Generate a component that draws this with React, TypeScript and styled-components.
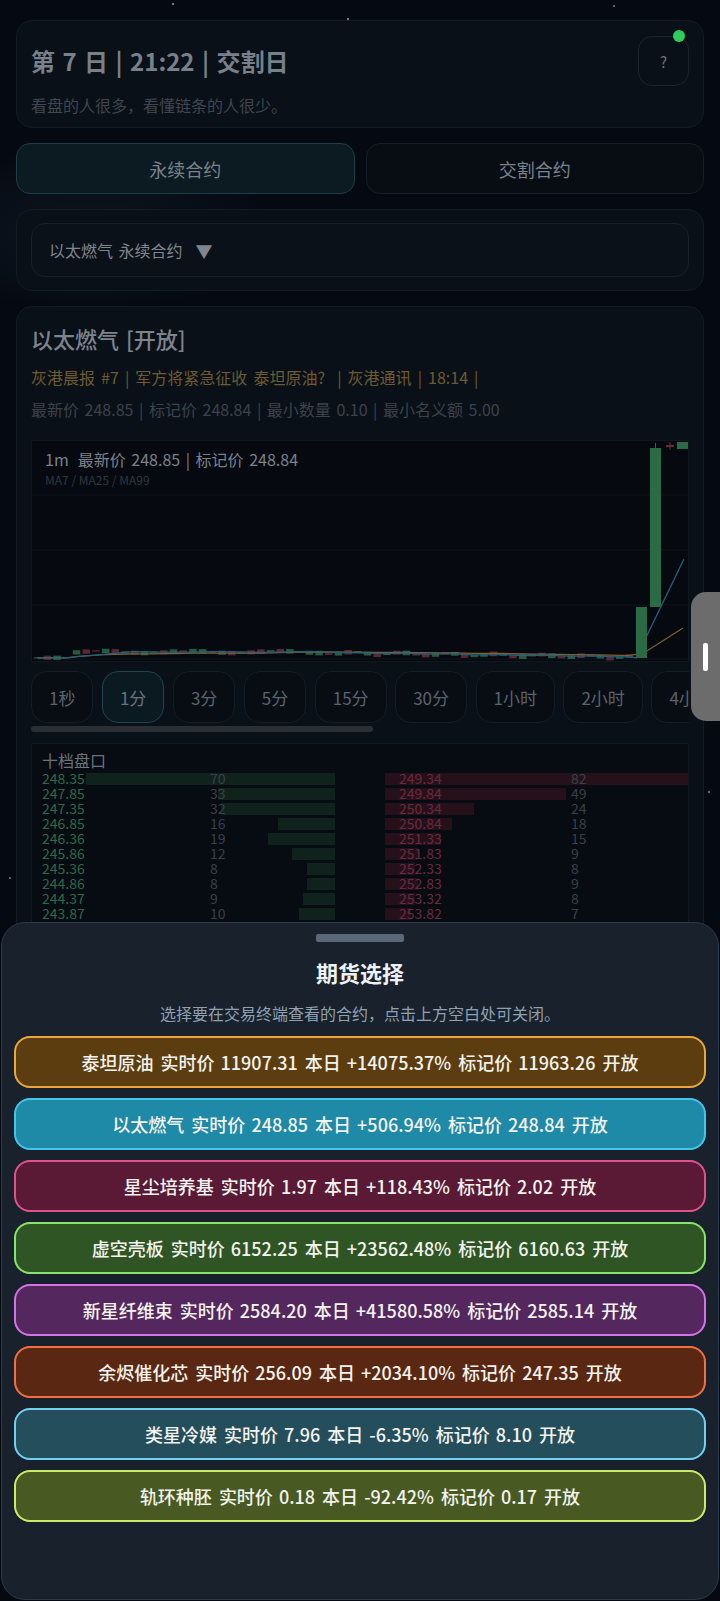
import React from 'react';
import styled, { createGlobalStyle } from 'styled-components';

const GlobalStyle = createGlobalStyle`
  * { box-sizing: border-box; }
  html, body { margin: 0; padding: 0; }
  body {
    background-color: #050a12;
    background-image:
      radial-gradient(circle at 173px 4px, rgba(160,170,190,0.7) 0 1px, transparent 1.6px),
      radial-gradient(circle at 348px 19px, rgba(160,170,190,0.7) 0 1px, transparent 1.6px),
      radial-gradient(circle at 614px 6px, rgba(160,170,190,0.5) 0 1px, transparent 1.6px),
      radial-gradient(circle at 709px 792px, rgba(160,170,190,0.6) 0 1px, transparent 1.6px),
      radial-gradient(circle at 10px 878px, rgba(160,170,190,0.5) 0 1px, transparent 1.6px),
      radial-gradient(ellipse 260px 120px at 90px 230px, rgba(22,30,42,0.55), transparent 70%);
    background-repeat: no-repeat;
    font-family: "Noto Sans CJK SC", "Noto Sans", sans-serif;
    word-spacing: 2px;
    overflow: hidden;
  }
`;

const Page = styled.div`
  display: flex;
  flex-direction: column;
  gap: 15px;
  padding: 20px 16px;
`;

const Card = styled.section`
  background: #0a1018;
  border: 1px solid #141b24;
  border-radius: 16px;
`;

const HeaderCard = styled(Card)`
  padding: 15px 14px 11px 14px;
`;

const HeaderRow = styled.div`
  display: flex;
  align-items: center;
  justify-content: space-between;
`;

const DayTitle = styled.h1`
  margin: 0;
  font-size: 24px;
  line-height: 32px;
  font-weight: 600;
  color: #78808a;
`;

const HelpButton = styled.button`
  position: relative;
  width: 51px;
  height: 50px;
  border-radius: 14px;
  border: 1px solid #1b232c;
  background: #0a1018;
  color: #6b737c;
  font-family: inherit;
  font-size: 15px;
  padding: 0;
`;

const LiveDot = styled.span`
  position: absolute;
  top: -7px;
  right: 3px;
  width: 12px;
  height: 12px;
  border-radius: 50%;
  background: #2ecc5f;
`;

const Motto = styled.p`
  margin: 8px 0 0;
  font-size: 16px;
  line-height: 22px;
  color: #3e4650;
`;

const Tabs = styled.div`
  display: grid;
  grid-template-columns: 1fr 1fr;
  gap: 11px;
`;

const Tab = styled.button<{ $active?: boolean }>`
  height: 51px;
  border-radius: 14px;
  font-family: inherit;
  font-size: 18px;
  color: #7a828b;
  background: ${(p) => (p.$active ? '#0c1a22' : '#080d14')};
  border: ${(p) => (p.$active ? '1.5px solid #1b3e4a' : '1px solid #161d26')};
`;

const SelectorCard = styled(Card)`
  padding: 13px 14px;
`;

const SelectBox = styled.div`
  height: 54px;
  display: flex;
  align-items: center;
  padding-left: 17px;
  border-radius: 14px;
  border: 1px solid #18202a;
  background: #0b1119;
  font-size: 16px;
  color: #7f868e;
`;

const Caret = styled.span`
  margin-left: 13px;
  font-size: 17px;
`;

const MainCard = styled(Card)`
  padding: 16px 14px 14px;
`;

const MarketTitle = styled.h2`
  margin: 0;
  font-size: 22px;
  line-height: 30px;
  font-weight: 500;
  color: #7d848c;
`;

const NewsLine = styled.div`
  margin-top: 12px;
  font-size: 16px;
  line-height: 24px;
  color: #6e5b31;
  word-spacing: 2.5px;
`;

const StatsLine = styled.div`
  margin-top: 8px;
  font-size: 16px;
  line-height: 24px;
  color: #3b434c;
`;

const ChartBox = styled.div`
  position: relative;
  margin-top: 19px;
  height: 222px;
  border: 1px solid #10171f;
  background: #060a10;
`;

const ChartSvg = styled.svg`
  display: block;
  width: 656px;
  height: 220px;
`;

const ChartLabel = styled.div`
  position: absolute;
  top: 8px;
  left: 13px;
`;

const ChartPrice = styled.div`
  font-size: 16px;
  line-height: 20px;
  color: #7a818a;
`;

const Interval = styled.span`
  margin-right: 9px;
`;

const MaLegend = styled.div`
  margin-top: 3px;
  font-size: 12px;
  line-height: 16px;
  color: #2f3740;
  word-spacing: 0;
`;

const IntervalRow = styled.div`
  margin-top: 9px;
  display: flex;
  gap: 8.5px;
  overflow: hidden;
`;

const IntervalButton = styled.button<{ $active?: boolean }>`
  flex-shrink: 0;
  height: 52px;
  padding: 0 17px;
  border-radius: 16px;
  font-family: inherit;
  font-size: 17px;
  color: ${(p) => (p.$active ? '#6a737d' : '#5b636c')};
  background: ${(p) => (p.$active ? '#0b1a21' : '#080d14')};
  border: 1px solid ${(p) => (p.$active ? '#1c4652' : '#141c25')};
`;

const ScrollTrack = styled.div`
  margin-top: 3px;
  height: 6px;
`;

const ScrollThumb = styled.div`
  width: 342px;
  height: 6px;
  border-radius: 3px;
  background: #2a2f36;
`;

const BookPanel = styled.div`
  margin-top: 11px;
  border: 1px solid #111820;
  background: #070b12;
  padding: 5px 0 6px 10px;
`;

const BookTitle = styled.div`
  font-size: 16px;
  line-height: 22px;
  color: #6c737c;
`;

const BookRow = styled.div`
  display: grid;
  grid-template-columns: 293px 303px;
  justify-content: space-between;
  height: 15px;
  font-size: 14px;
  line-height: 15px;
`;

const BidCell = styled.div`
  position: relative;
  display: grid;
  grid-template-columns: 168px 1fr;
`;

const AskCell = styled.div`
  position: relative;
  display: grid;
  grid-template-columns: 172px 1fr;
  padding-left: 14px;
`;

const DepthBar = styled.div<{ $side: 'bid' | 'ask' }>`
  position: absolute;
  top: 2px;
  height: 12px;
  ${(p) => (p.$side === 'bid' ? 'right: 0; background: #0f231c;' : 'left: 0; background: #26111b;')}
`;

const Price = styled.span<{ $side: 'bid' | 'ask' }>`
  position: relative;
  color: ${(p) => (p.$side === 'bid' ? '#2b6a46' : '#6b2a3b')};
`;

const Qty = styled.span`
  position: relative;
  color: #3a4048;
`;

const EdgeHandle = styled.div`
  position: fixed;
  right: 0;
  top: 592px;
  width: 29px;
  height: 129px;
  border-radius: 15px 0 0 15px;
  background: #6c6c6c;
  display: flex;
  align-items: center;
  justify-content: center;
`;

const HandleBar = styled.div`
  width: 5px;
  height: 28px;
  border-radius: 2px;
  background: #ffffff;
`;

const Sheet = styled.div`
  position: fixed;
  left: 1px;
  right: 1px;
  top: 922px;
  bottom: 1px;
  background: #18212c;
  border: 1px solid #2a3a4b;
  border-radius: 24px;
  padding: 11px 12px 0;
  display: flex;
  flex-direction: column;
`;

const Grabber = styled.div`
  align-self: center;
  width: 88px;
  height: 8px;
  border-radius: 2px;
  background: #5a6878;
`;

const SheetTitle = styled.h3`
  margin: 14px 0 0;
  text-align: center;
  font-size: 22px;
  line-height: 32px;
  font-weight: 700;
  color: #eef2f6;
`;

const SheetHint = styled.p`
  margin: 14px 0 0;
  text-align: center;
  font-size: 16px;
  line-height: 22px;
  color: #8fa1b3;
`;

const FuturesList = styled.div`
  margin-top: 12px;
  display: flex;
  flex-direction: column;
  gap: 10px;
`;

const FutureItem = styled.button<{ $bg: string; $border: string }>`
  height: 52px;
  border-radius: 16px;
  border: 2px solid ${(p) => p.$border};
  background: ${(p) => p.$bg};
  display: flex;
  align-items: center;
  justify-content: center;
  gap: 7px;
  font-family: inherit;
  font-size: 18px;
  font-weight: 500;
  word-spacing: 2px;
  color: #f3f3ee;
  padding: 0;
`;

const book = [
  { bp: '248.35', bq: 70, ap: '249.34', aq: 82 },
  { bp: '247.85', bq: 33, ap: '249.84', aq: 49 },
  { bp: '247.35', bq: 32, ap: '250.34', aq: 24 },
  { bp: '246.85', bq: 16, ap: '250.84', aq: 18 },
  { bp: '246.36', bq: 19, ap: '251.33', aq: 15 },
  { bp: '245.86', bq: 12, ap: '251.83', aq: 9 },
  { bp: '245.36', bq: 8, ap: '252.33', aq: 8 },
  { bp: '244.86', bq: 8, ap: '252.83', aq: 9 },
  { bp: '244.37', bq: 9, ap: '253.32', aq: 8 },
  { bp: '243.87', bq: 10, ap: '253.82', aq: 7 },
];

const intervals = ['1秒', '1分', '3分', '5分', '15分', '30分', '1小时', '2小时', '4小时', '6小时', '12小时'];

const futures = [
  { name: '泰坦原油', price: '11907.31', day: '+14075.37%', mark: '11963.26', bg: '#5c3d0f', border: '#eca63a' },
  { name: '以太燃气', price: '248.85', day: '+506.94%', mark: '248.84', bg: '#1f89a8', border: '#42c6f0' },
  { name: '星尘培养基', price: '1.97', day: '+118.43%', mark: '2.02', bg: '#5a1a36', border: '#e0528c' },
  { name: '虚空壳板', price: '6152.25', day: '+23562.48%', mark: '6160.63', bg: '#2f5525', border: '#88e46c' },
  { name: '新星纤维束', price: '2584.20', day: '+41580.58%', mark: '2585.14', bg: '#54275f', border: '#d672e8' },
  { name: '余烬催化芯', price: '256.09', day: '+2034.10%', mark: '247.35', bg: '#5a2812', border: '#f07042' },
  { name: '类星冷媒', price: '7.96', day: '-6.35%', mark: '8.10', bg: '#254e5c', border: '#72d0f2' },
  { name: '轨环种胚', price: '0.18', day: '-92.42%', mark: '0.17', bg: '#485a22', border: '#cdeb6a' },
];

type Candle = { x: number; top: number; h: number; up: boolean; mid: number };

const candles: Candle[] = Array.from({ length: 62 }, (_, i) => {
  const x = 2 + i * 9.7;
  let mid: number;
  if (i < 4) mid = 216.8;
  else if (i < 30) mid = 211 + Math.sin(i * 0.7) * 1.1;
  else mid = 211.8 + (i - 30) * 0.14 + Math.sin(i * 1.3) * 1.3;
  const h = 1.2 + Math.abs(Math.sin(i * 2.1)) * 3.6;
  const up = Math.sin(i * 3.7) > -0.1;
  return { x, top: mid - h / 2, h, up, mid };
});

const ma = (n: number) =>
  candles.map((c, i) => {
    const s = candles.slice(Math.max(0, i - n + 1), i + 1);
    const v = s.reduce((a, b) => a + b.mid, 0) / s.length;
    return `${(c.x + 3.5).toFixed(1)},${v.toFixed(1)}`;
  });

const blueLine = [...ma(7), '604,217', '652,118'].join(' ');
const orangeLine = [...ma(25), '611,212.5', '651,187'].join(' ');

function PriceChart() {
  return (
    <ChartBox>
      <ChartSvg viewBox="0 0 656 220">
        {[54, 109, 164, 218].map((y) => (
          <line key={y} x1="0" x2="656" y1={y} y2={y} stroke="#0e141c" strokeWidth="1" />
        ))}
        {candles.map((c, i) => (
          <rect
            key={i}
            x={c.x}
            y={c.top}
            width="7.5"
            height={c.h}
            fill={c.up ? '#245c3e' : '#5e2532'}
          />
        ))}
        <polyline points={orangeLine} fill="none" stroke="#7d5f34" strokeWidth="1.3" />
        <polyline points={blueLine} fill="none" stroke="#23607f" strokeWidth="1.3" />
        <rect x="604" y="166" width="11" height="51" fill="#2a6a45" />
        <line x1="623.5" x2="623.5" y1="2" y2="8" stroke="#2a6a45" strokeWidth="1" />
        <rect x="618" y="7" width="11" height="159" fill="#2a6a45" />
        <line x1="638" x2="638" y1="1" y2="9" stroke="#6b2a38" strokeWidth="1" />
        <rect x="634" y="4" width="8" height="2" fill="#6b2a38" />
        <rect x="645" y="1" width="11" height="7" fill="#2a6a45" />
      </ChartSvg>
      <ChartLabel>
        <ChartPrice>
          <Interval>1m</Interval>最新价 248.85 | 标记价 248.84
        </ChartPrice>
        <MaLegend>MA7 / MA25 / MA99</MaLegend>
      </ChartLabel>
    </ChartBox>
  );
}

export default function App() {
  return (
    <>
      <GlobalStyle />
      <Page>
        <HeaderCard>
          <HeaderRow>
            <DayTitle>第 7 日 | 21:22 | 交割日</DayTitle>
            <HelpButton>
              ?
              <LiveDot />
            </HelpButton>
          </HeaderRow>
          <Motto>看盘的人很多，看懂链条的人很少。</Motto>
        </HeaderCard>

        <Tabs>
          <Tab $active>永续合约</Tab>
          <Tab>交割合约</Tab>
        </Tabs>

        <SelectorCard>
          <SelectBox>
            以太燃气 永续合约<Caret>▼</Caret>
          </SelectBox>
        </SelectorCard>

        <MainCard>
          <MarketTitle>以太燃气 [开放]</MarketTitle>
          <NewsLine>灰港晨报 #7 | 军方将紧急征收 泰坦原油? &nbsp;| 灰港通讯 | 18:14 |</NewsLine>
          <StatsLine>最新价 248.85 | 标记价 248.84 | 最小数量 0.10 | 最小名义额 5.00</StatsLine>
          <PriceChart />
          <IntervalRow>
            {intervals.map((t) => (
              <IntervalButton key={t} $active={t === '1分'}>
                {t}
              </IntervalButton>
            ))}
          </IntervalRow>
          <ScrollTrack>
            <ScrollThumb />
          </ScrollTrack>
          <BookPanel>
            <BookTitle>十档盘口</BookTitle>
            {book.map((r) => (
              <BookRow key={r.bp}>
                <BidCell>
                  <DepthBar $side="bid" style={{ width: `${Math.round(r.bq * 3.55)}px` }} />
                  <Price $side="bid">{r.bp}</Price>
                  <Qty>{r.bq}</Qty>
                </BidCell>
                <AskCell>
                  <DepthBar $side="ask" style={{ width: `${Math.round(r.aq * 3.7)}px` }} />
                  <Price $side="ask">{r.ap}</Price>
                  <Qty>{r.aq}</Qty>
                </AskCell>
              </BookRow>
            ))}
          </BookPanel>
        </MainCard>
      </Page>

      <EdgeHandle>
        <HandleBar />
      </EdgeHandle>

      <Sheet>
        <Grabber />
        <SheetTitle>期货选择</SheetTitle>
        <SheetHint>选择要在交易终端查看的合约，点击上方空白处可关闭。</SheetHint>
        <FuturesList>
          {futures.map((f) => (
            <FutureItem key={f.name} $bg={f.bg} $border={f.border}>
              <span>{f.name}</span>
              <span>实时价 {f.price}</span>
              <span>本日 {f.day}</span>
              <span>标记价 {f.mark}</span>
              <span>开放</span>
            </FutureItem>
          ))}
        </FuturesList>
      </Sheet>
    </>
  );
}
